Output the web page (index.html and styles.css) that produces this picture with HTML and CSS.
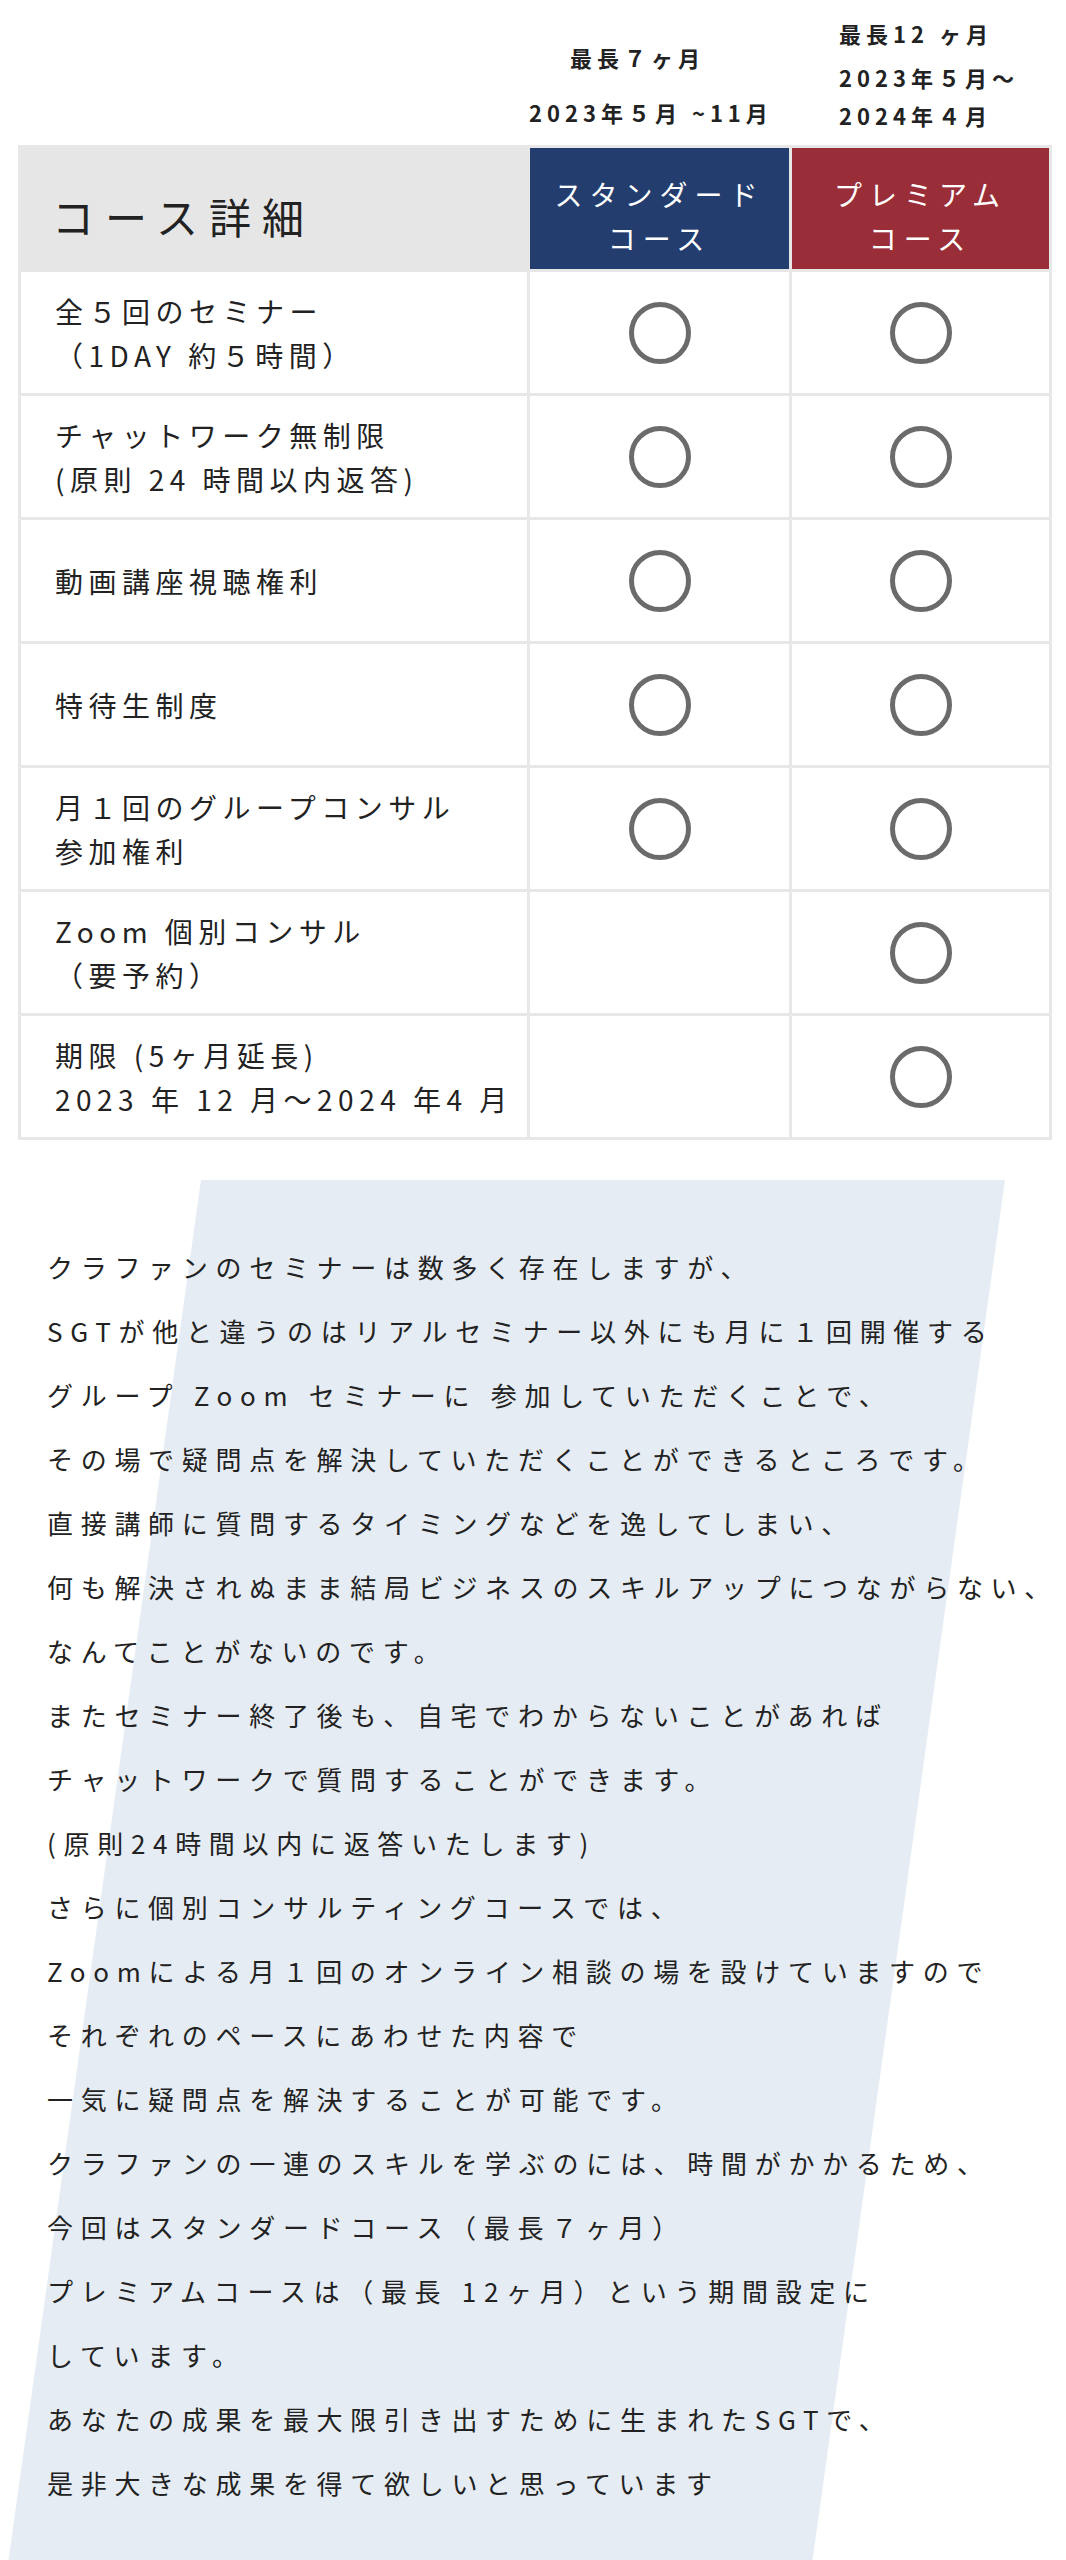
FILE: index.html
```html
<!DOCTYPE html>
<html lang="ja">
<head>
    <meta charset="UTF-8">
    <title>コース詳細</title>
    <link rel="stylesheet" href="styles.css">
</head>
<body>
    <div class="wrap">
        <div class="labels">
            <div class="spacer"></div>
            <div class="label label-std">
                <p class="period-len">最長７ヶ月</p>
                <p class="period">2023年５月 ~11月</p>
            </div>
            <div class="label label-pre">
                <p class="period-len">最長12 ヶ月</p>
                <p class="period">2023年５月～<br>2024年４月</p>
            </div>
        </div>
        <table class="course">
            <colgroup>
                <col class="col-item">
                <col class="col-std">
                <col class="col-pre">
            </colgroup>
            <tr>
                <th class="th-title">コース詳細</th>
                <th class="th-std">スタンダード<br>コース</th>
                <th class="th-pre">プレミアム<br>コース</th>
            </tr>
            <tr>
                <td class="item">全５回のセミナー<br>（1DAY 約５時間）</td>
                <td class="mark"><span class="circle"></span></td>
                <td class="mark"><span class="circle"></span></td>
            </tr>
            <tr>
                <td class="item">チャットワーク無制限<br>(原則 24 時間以内返答)</td>
                <td class="mark"><span class="circle"></span></td>
                <td class="mark"><span class="circle"></span></td>
            </tr>
            <tr>
                <td class="item">動画講座視聴権利</td>
                <td class="mark"><span class="circle"></span></td>
                <td class="mark"><span class="circle"></span></td>
            </tr>
            <tr>
                <td class="item">特待生制度</td>
                <td class="mark"><span class="circle"></span></td>
                <td class="mark"><span class="circle"></span></td>
            </tr>
            <tr>
                <td class="item">月１回のグループコンサル<br>参加権利</td>
                <td class="mark"><span class="circle"></span></td>
                <td class="mark"><span class="circle"></span></td>
            </tr>
            <tr>
                <td class="item">Zoom 個別コンサル<br>（要予約）</td>
                <td class="mark"></td>
                <td class="mark"><span class="circle"></span></td>
            </tr>
            <tr>
                <td class="item">期限 (5ヶ月延長)<br>2023 年 12 月～2024 年4 月</td>
                <td class="mark"></td>
                <td class="mark"><span class="circle"></span></td>
            </tr>
        </table>
    </div>

    <div class="message">
        <p>
            クラファンのセミナーは数多く存在しますが、<br>
            SGTが他と違うのはリアルセミナー以外にも月に１回開催する<br>
            グループ Zoom セミナーに 参加していただくことで、<br>
            その場で疑問点を解決していただくことができるところです。<br>
            直接講師に質問するタイミングなどを逸してしまい、<br>
            何も解決されぬまま結局ビジネスのスキルアップにつながらない、<br>
            なんてことがないのです。<br>
            またセミナー終了後も、自宅でわからないことがあれば<br>
            チャットワークで質問することができます。<br>
            (原則24時間以内に返答いたします)<br>
            さらに個別コンサルティングコースでは、<br>
            Zoomによる月１回のオンライン相談の場を設けていますので<br>
            それぞれのペースにあわせた内容で<br>
            一気に疑問点を解決することが可能です。<br>
            クラファンの一連のスキルを学ぶのには、時間がかかるため、<br>
            今回はスタンダードコース（最長７ヶ月）<br>
            プレミアムコースは（最長 12ヶ月）という期間設定に<br>
            しています。<br>
            あなたの成果を最大限引き出すために生まれたSGTで、<br>
            是非大きな成果を得て欲しいと思っています
        </p>
    </div>
</body>
</html>
```

FILE: styles.css
```css
* {
    margin: 0;
    padding: 0;
}
body {
    font-family: "Noto Sans CJK JP", "Noto Sans", sans-serif;
    color: #222;
    background: #fff;
}
.wrap {
    width: 1031px;
    margin: 0 18px;
}

/* 期間ラベル */
.labels {
    display: flex;
    height: 145px;
}
.labels > div {
    flex-shrink: 0;
    box-sizing: border-box;
}
.labels .spacer {
    width: 509px;
}
.label {
    font-size: 22px;
    font-weight: bold;
    letter-spacing: 5px;
    line-height: 34px;
}
.label-std {
    width: 262px;
    padding-top: 40px;
}
.label-std .period-len {
    padding-left: 43px;
}
.label-std .period {
    margin-top: 21px;
    padding-left: 2px;
}
.label-pre {
    width: 260px;
    padding-top: 16px;
    padding-left: 50px;
}
.label-pre .period {
    margin-top: 8px;
    line-height: 38px;
}

/* 比較表 */
.course {
    width: 1031px;
    border-collapse: collapse;
    table-layout: fixed;
}
.col-item {
    width: 509px;
}
.col-std {
    width: 262px;
}
.col-pre {
    width: 260px;
}
.course th,
.course td {
    height: 121px;
    border: 3px solid #e7e7e7;
    vertical-align: middle;
}
.course th {
    height: 107px;
    padding-top: 14px;
    font-weight: normal;
}
.th-title {
    background: #e6e6e6;
    text-align: left;
    padding-left: 31px;
    font-size: 42px;
    letter-spacing: 11px;
}
.th-std,
.th-pre {
    color: #fff;
    font-size: 28px;
    letter-spacing: 7px;
    line-height: 44px;
    text-align: center;
}
.th-std {
    background: #233d6e;
}
.th-pre {
    background: #992d38;
}
.item {
    padding-left: 34px;
    font-size: 28px;
    letter-spacing: 5.5px;
    line-height: 44px;
    white-space: nowrap;
}
.mark {
    text-align: center;
}
.circle {
    display: block;
    width: 52px;
    height: 52px;
    margin: 0 auto;
    border: 5px solid #6b6b6b;
    border-radius: 50%;
}

/* 説明文 */
.message {
    position: relative;
    z-index: 0;
    margin-top: 40px;
    padding: 55px 0 90px 47px;
}
.message::before {
    content: "";
    position: absolute;
    top: 0;
    left: 0;
    z-index: -1;
    width: 1005px;
    height: 1420px;
    background: #e6ecf3;
    clip-path: polygon(201px 0, 1005px 0, 807px 1420px, 3px 1420px);
}
.message p {
    font-size: 26px;
    letter-spacing: 7.7px;
    line-height: 64px;
    white-space: nowrap;
}
```
